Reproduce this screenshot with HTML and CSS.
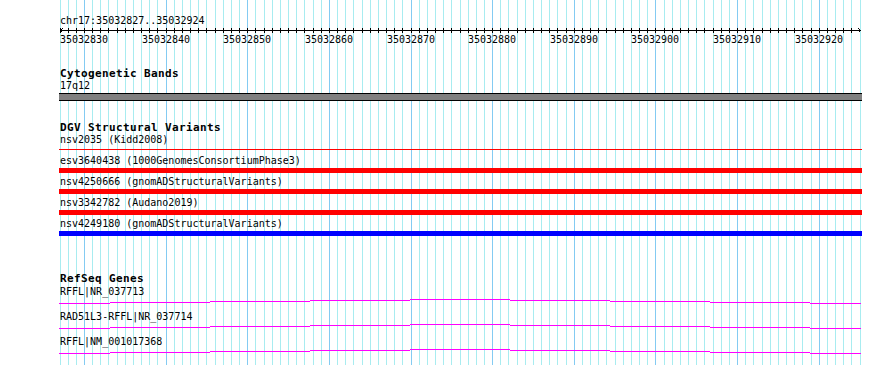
FILE: index.html
```html
<!DOCTYPE html>
<html lang="en">
<head>
<meta charset="utf-8">
<title>chr17:35032827..35032924</title>
<link rel="stylesheet" href="styles.css">
</head>
<body>
<div class="view">
  <svg class="grid" width="890" height="365" aria-hidden="true">
    <path class="grid-minor" d="M60.5 0V365M68.5 0V365M76.5 0V365M92.5 0V365M100.5 0V365M108.5 0V365M117.5 0V365M125.5 0V365M133.5 0V365M141.5 0V365M149.5 0V365M157.5 0V365M174.5 0V365M182.5 0V365M190.5 0V365M198.5 0V365M206.5 0V365M215.5 0V365M223.5 0V365M231.5 0V365M239.5 0V365M255.5 0V365M264.5 0V365M272.5 0V365M280.5 0V365M288.5 0V365M296.5 0V365M304.5 0V365M313.5 0V365M321.5 0V365M337.5 0V365M345.5 0V365M353.5 0V365M362.5 0V365M370.5 0V365M378.5 0V365M386.5 0V365M394.5 0V365M402.5 0V365M419.5 0V365M427.5 0V365M435.5 0V365M443.5 0V365M451.5 0V365M460.5 0V365M468.5 0V365M476.5 0V365M484.5 0V365M500.5 0V365M508.5 0V365M517.5 0V365M525.5 0V365M533.5 0V365M541.5 0V365M549.5 0V365M557.5 0V365M566.5 0V365M582.5 0V365M590.5 0V365M598.5 0V365M606.5 0V365M615.5 0V365M623.5 0V365M631.5 0V365M639.5 0V365M647.5 0V365M664.5 0V365M672.5 0V365M680.5 0V365M688.5 0V365M696.5 0V365M704.5 0V365M713.5 0V365M721.5 0V365M729.5 0V365M745.5 0V365M753.5 0V365M762.5 0V365M770.5 0V365M778.5 0V365M786.5 0V365M794.5 0V365M802.5 0V365M811.5 0V365M827.5 0V365M835.5 0V365M843.5 0V365M851.5 0V365M860.5 0V365"/>
    <path class="grid-major" d="M84.5 0V365M166.5 0V365M247.5 0V365M329.5 0V365M411.5 0V365M492.5 0V365M574.5 0V365M655.5 0V365M737.5 0V365M819.5 0V365"/>
  </svg>

  <div class="tracks">
    <div class="locus">chr17:35032827..35032924</div>
    <svg class="ruler" width="890" height="20" viewBox="0 26 890 20">
      <path class="ruler-line" d="M60 30.5H861M62.5 28.5L60.5 30.5L62.5 32.5M858.5 28.5L860.5 30.5L858.5 32.5"/>
      <path class="ruler-line" d="M60.5 28V33M68.5 28V33M76.5 28V33M84.5 28V33M92.5 28V33M100.5 28V33M108.5 28V33M117.5 28V33M125.5 28V33M133.5 28V33M141.5 28V33M149.5 28V33M157.5 28V33M166.5 28V33M174.5 28V33M182.5 28V33M190.5 28V33M198.5 28V33M206.5 28V33M215.5 28V33M223.5 28V33M231.5 28V33M239.5 28V33M247.5 28V33M255.5 28V33M264.5 28V33M272.5 28V33M280.5 28V33M288.5 28V33M296.5 28V33M304.5 28V33M313.5 28V33M321.5 28V33M329.5 28V33M337.5 28V33M345.5 28V33M353.5 28V33M362.5 28V33M370.5 28V33M378.5 28V33M386.5 28V33M394.5 28V33M402.5 28V33M411.5 28V33M419.5 28V33M427.5 28V33M435.5 28V33M443.5 28V33M451.5 28V33M460.5 28V33M468.5 28V33M476.5 28V33M484.5 28V33M492.5 28V33M500.5 28V33M508.5 28V33M517.5 28V33M525.5 28V33M533.5 28V33M541.5 28V33M549.5 28V33M557.5 28V33M566.5 28V33M574.5 28V33M582.5 28V33M590.5 28V33M598.5 28V33M606.5 28V33M615.5 28V33M623.5 28V33M631.5 28V33M639.5 28V33M647.5 28V33M655.5 28V33M664.5 28V33M672.5 28V33M680.5 28V33M688.5 28V33M696.5 28V33M704.5 28V33M713.5 28V33M721.5 28V33M729.5 28V33M737.5 28V33M745.5 28V33M753.5 28V33M762.5 28V33M770.5 28V33M778.5 28V33M786.5 28V33M794.5 28V33M802.5 28V33M811.5 28V33M819.5 28V33M827.5 28V33M835.5 28V33M843.5 28V33M851.5 28V33"/>
      <g class="ruler-labels">
        <text x="84" y="43">35032830</text>
        <text x="166" y="43">35032840</text>
        <text x="247" y="43">35032850</text>
        <text x="329" y="43">35032860</text>
        <text x="411" y="43">35032870</text>
        <text x="492" y="43">35032880</text>
        <text x="574" y="43">35032890</text>
        <text x="655" y="43">35032900</text>
        <text x="737" y="43">35032910</text>
        <text x="819" y="43">35032920</text>
      </g>
    </svg>

    <section class="track track-cyto">
      <h2 class="track-title">Cytogenetic Bands</h2>
      <div class="feature">
        <div class="feature-label">17q12</div>
        <div class="band-bar"></div>
      </div>
    </section>

    <section class="track track-dgv">
      <h2 class="track-title">DGV Structural Variants</h2>
      <div class="feature feature-thin">
        <div class="feature-label">nsv2035 (Kidd2008)</div>
        <div class="variant-line"></div>
      </div>
      <div class="feature feature-variant">
        <div class="feature-label">esv3640438 (1000GenomesConsortiumPhase3)</div>
        <div class="variant-bar loss"></div>
      </div>
      <div class="feature feature-variant">
        <div class="feature-label">nsv4250666 (gnomADStructuralVariants)</div>
        <div class="variant-bar loss"></div>
      </div>
      <div class="feature feature-variant">
        <div class="feature-label">nsv3342782 (Audano2019)</div>
        <div class="variant-bar loss"></div>
      </div>
      <div class="feature feature-variant">
        <div class="feature-label">nsv4249180 (gnomADStructuralVariants)</div>
        <div class="variant-bar gain"></div>
      </div>
    </section>

    <section class="track track-genes">
      <h2 class="track-title">RefSeq Genes</h2>
      <div class="feature feature-gene">
        <div class="feature-label">RFFL|NR_037713</div>
        <svg class="intron" width="890" height="5" viewBox="0 0 890 5">
          <rect x="59" y="4" width="51" height="1"/><rect x="110" y="3" width="100" height="1"/><rect x="210" y="2" width="100" height="1"/><rect x="310" y="1" width="100" height="1"/><rect x="410" y="0" width="100" height="1"/><rect x="510" y="1" width="100" height="1"/><rect x="610" y="2" width="100" height="1"/><rect x="710" y="3" width="100" height="1"/><rect x="810" y="4" width="51" height="1"/>
        </svg>
      </div>
      <div class="feature feature-gene">
        <div class="feature-label">RAD51L3-RFFL|NR_037714</div>
        <svg class="intron" width="890" height="5" viewBox="0 0 890 5">
          <rect x="59" y="4" width="51" height="1"/><rect x="110" y="3" width="100" height="1"/><rect x="210" y="2" width="100" height="1"/><rect x="310" y="1" width="100" height="1"/><rect x="410" y="0" width="100" height="1"/><rect x="510" y="1" width="100" height="1"/><rect x="610" y="2" width="100" height="1"/><rect x="710" y="3" width="100" height="1"/><rect x="810" y="4" width="51" height="1"/>
        </svg>
      </div>
      <div class="feature feature-gene">
        <div class="feature-label">RFFL|NM_001017368</div>
        <svg class="intron" width="890" height="5" viewBox="0 0 890 5">
          <rect x="59" y="4" width="51" height="1"/><rect x="110" y="3" width="100" height="1"/><rect x="210" y="2" width="100" height="1"/><rect x="310" y="1" width="100" height="1"/><rect x="410" y="0" width="100" height="1"/><rect x="510" y="1" width="100" height="1"/><rect x="610" y="2" width="100" height="1"/><rect x="710" y="3" width="100" height="1"/><rect x="810" y="4" width="51" height="1"/>
        </svg>
      </div>
    </section>
  </div>
</div>
</body>
</html>
```

FILE: styles.css
```css
html, body {
  margin: 0;
  padding: 0;
  background: #ffffff;
}

.view {
  position: relative;
  width: 890px;
  height: 365px;
  overflow: hidden;
  background: #ffffff;
  color: #000000;
}

.grid {
  position: absolute;
  left: 0;
  top: 0;
  z-index: 0;
  shape-rendering: crispEdges;
}

.grid-minor {
  fill: none;
  stroke: #a8ecf0;
  stroke-width: 1;
}

.grid-major {
  fill: none;
  stroke: #84cbf2;
  stroke-width: 1;
}

.tracks {
  position: relative;
  z-index: 1;
  padding-top: 16px;
}

.locus,
.feature-label {
  margin-left: 60px;
  height: 10px;
  font-family: "DejaVu Sans Mono", monospace;
  font-size: 10px;
  line-height: 10px;
  white-space: pre;
}

.ruler {
  display: block;
  shape-rendering: crispEdges;
}

.ruler-line {
  fill: none;
  stroke: #000000;
  stroke-width: 1;
}

.ruler-labels text {
  font-family: "DejaVu Sans Mono", monospace;
  font-size: 10px;
  text-anchor: middle;
  fill: #000000;
}

.track-title {
  margin: 0 0 0 60px;
  height: 12px;
  font-family: "DejaVu Sans Mono", monospace;
  font-weight: bold;
  font-size: 11px;
  line-height: 12px;
  letter-spacing: 0.38px;
  white-space: pre;
}

.track-cyto {
  margin-top: 22px;
}

.track-dgv {
  margin-top: 21px;
}

.track-genes {
  margin-top: 37px;
}

.feature {
  display: flex;
  flex-direction: column;
}

.track-cyto .feature {
  margin-top: 1px;
  gap: 2px;
}

.band-bar {
  margin-left: 59px;
  width: 803px;
  height: 6px;
  background: #808080;
  border-top: 1px solid #000000;
  border-bottom: 1px solid #000000;
}

.feature-thin {
  margin-top: 1px;
  gap: 4px;
}

.variant-line {
  margin-left: 59px;
  width: 803px;
  height: 1px;
  background: #ff0000;
}

.feature-variant {
  gap: 2px;
  margin-top: 4px;
}

.feature-thin + .feature-variant {
  margin-top: 6px;
}

.variant-bar {
  margin-left: 59px;
  width: 803px;
  height: 5px;
}

.variant-bar.loss {
  background: #ff0000;
}

.variant-bar.gain {
  background: #0000ff;
}

.feature-gene {
  gap: 2px;
  margin-top: 8px;
}

.track-title + .feature-gene {
  margin-top: 2px;
}

.intron {
  display: block;
  shape-rendering: crispEdges;
}

.intron rect {
  fill: #ff00ff;
}
```
